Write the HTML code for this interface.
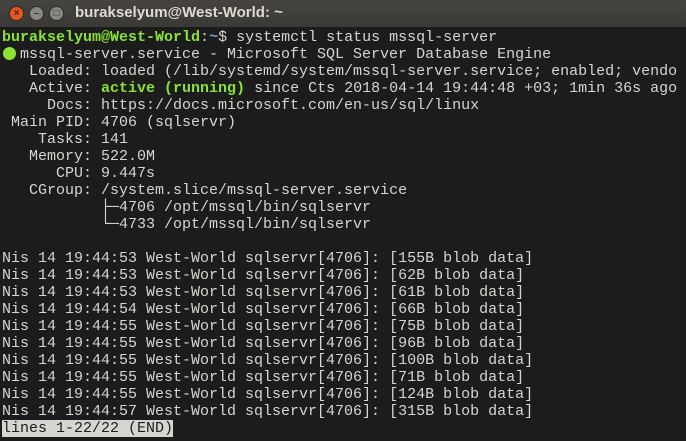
<!DOCTYPE html>
<html><head><meta charset="utf-8"><style>
html,body{margin:0;padding:0;width:686px;height:441px;overflow:hidden;background:#1c1c1c}
.tb{position:absolute;left:0;top:0;width:686px;height:27px;background:linear-gradient(#45443f,#3a3935);}
.tt{position:absolute;left:75px;top:4px;font:bold 15px "Liberation Sans",sans-serif;color:#dfdbd2}
.b{position:absolute;top:6px;width:15px;height:15px;border-radius:50%;box-sizing:border-box;border:1px solid #2e2d2a;font:bold 10px/13px 'Liberation Sans',sans-serif;text-align:center;color:#3a3935}
pre{position:absolute;left:2px;top:29px;margin:0;font:15px/17px "Liberation Mono",monospace;color:#d3d7cf;letter-spacing:0}
.g{color:#8ae234;font-weight:bold}.bl{color:#729fcf;font-weight:bold}
.dot{display:inline-block;width:18px;height:12px;vertical-align:-1px;position:relative}
.dot:before{content:"";position:absolute;left:1px;top:0;width:13px;height:13px;border-radius:50%;background:#8ae234}
.inv{background:#d3d7cf;color:#1c1c1c}
</style></head><body>
<div class="tb"></div>
<div class="b" style="left:9px;background:#e9541f;color:#4a1a08">×</div>
<div class="b" style="left:29px;background:#8a8882">–</div>
<div class="b" style="left:49px;background:#8a8882">□</div>
<div class="tt">burakselyum@West-World: ~</div>
<pre><span class="g">burakselyum@West-World</span>:<span class="bl">~</span>$ systemctl status mssql-server
<span class="dot"></span>mssql-server.service - Microsoft SQL Server Database Engine
   Loaded: loaded (/lib/systemd/system/mssql-server.service; enabled; vendo
   Active: <span class="g">active (running)</span> since Cts 2018-04-14 19:44:48 +03; 1min 36s ago
     Docs: https://docs.microsoft.com/en-us/sql/linux
 Main PID: 4706 (sqlservr)
    Tasks: 141
   Memory: 522.0M
      CPU: 9.447s
   CGroup: /system.slice/mssql-server.service
           ├─4706 /opt/mssql/bin/sqlservr
           └─4733 /opt/mssql/bin/sqlservr

Nis 14 19:44:53 West-World sqlservr[4706]: [155B blob data]
Nis 14 19:44:53 West-World sqlservr[4706]: [62B blob data]
Nis 14 19:44:53 West-World sqlservr[4706]: [61B blob data]
Nis 14 19:44:54 West-World sqlservr[4706]: [66B blob data]
Nis 14 19:44:55 West-World sqlservr[4706]: [75B blob data]
Nis 14 19:44:55 West-World sqlservr[4706]: [96B blob data]
Nis 14 19:44:55 West-World sqlservr[4706]: [100B blob data]
Nis 14 19:44:55 West-World sqlservr[4706]: [71B blob data]
Nis 14 19:44:55 West-World sqlservr[4706]: [124B blob data]
Nis 14 19:44:57 West-World sqlservr[4706]: [315B blob data]
<span class="inv">lines 1-22/22 (END)</span></pre>
</body></html>
